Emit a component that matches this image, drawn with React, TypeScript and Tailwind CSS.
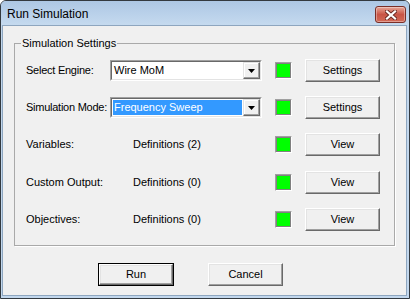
import type { ReactNode } from 'react'

const font = { fontFamily: '"Liberation Sans", Arial, sans-serif' }

const ClassicButton = ({ children, isDefault = false }: { children: ReactNode; isDefault?: boolean }) => {
  const face = (
    <div className="flex-1 flex items-center justify-center bg-[#f0f0f0] border border-t-white border-l-white border-b-[#696969] border-r-[#696969] shadow-[inset_-1px_-1px_0_#a0a0a0,inset_1px_1px_0_#e3e3e3] text-[11px] text-black">
      {children}
    </div>
  )
  if (isDefault) {
    return <div className="shrink-0 w-[76px] h-[23px] flex border border-black">{face}</div>
  }
  return <div className="shrink-0 w-[75px] h-[23px] flex">{face}</div>
}

const StatusLight = () => (
  <div className="shrink-0 w-[17px] h-[17px] border border-t-[#a0a0a0] border-l-[#a0a0a0] border-b-white border-r-white">
    <div className="w-full h-full bg-[#00ff00] border border-[#808080]" />
  </div>
)

const ComboBox = ({ value, selected = false }: { value: string; selected?: boolean }) => (
  <div className="shrink-0 w-[152px] h-[21px] flex border border-t-[#a0a0a0] border-l-[#a0a0a0] border-b-white border-r-white">
    <div className="flex-1 flex border border-t-[#696969] border-l-[#696969] border-b-[#e3e3e3] border-r-[#e3e3e3] bg-white">
      <div className="flex-1 flex items-center p-[1px]">
        <div className={`flex-1 h-full flex items-center pl-[1px] text-[11px] whitespace-nowrap ${selected ? 'bg-[#3399ff] text-white' : 'text-black'}`}>
          {value}
        </div>
      </div>
      <div className="w-[17px] flex items-center justify-center bg-[#f0f0f0] border border-t-[#e3e3e3] border-l-[#e3e3e3] border-b-[#696969] border-r-[#696969] shadow-[inset_-1px_-1px_0_#a0a0a0,inset_1px_1px_0_#fff]">
        <svg width="7" height="4" viewBox="0 0 7 4">
          <path d="M0 0h7L3.5 4z" fill="#000" />
        </svg>
      </div>
    </div>
  </div>
)

const rows = [
  { label: 'Select Engine:', combo: 'Wire MoM', action: 'Settings' },
  { label: 'Simulation Mode:', combo: 'Frequency Sweep', selected: true, action: 'Settings' },
  { label: 'Variables:', text: 'Definitions (2)', action: 'View' },
  { label: 'Custom Output:', text: 'Definitions (0)', action: 'View' },
  { label: 'Objectives:', text: 'Definitions (0)', action: 'View' },
]

export default function App() {
  return (
    <div style={font} className="w-[410px] h-[299px] flex flex-col bg-[#c2d7ed] border border-[#33393f] rounded-t-[6px] overflow-hidden text-black">
      {/* Title bar */}
      <div className="h-[24px] flex items-center justify-between pl-[6px] pr-[3px] bg-gradient-to-b from-[#adc7e4] to-[#c5daef]">
        <span className="text-[12px] pt-[2px]">Run Simulation</span>
        <div className="w-[31px] h-[17px] mt-[3px] flex items-center justify-center rounded-[3px] border border-[#7a2e27] bg-gradient-to-b from-[#e6a597] via-[#c85446] to-[#d26a57] shadow-[inset_0_0_0_1px_rgba(255,255,255,0.35)]">
          <svg width="12" height="10" viewBox="0 0 12 10">
            <path d="M2 1.5L10 8.5M10 1.5L2 8.5" stroke="#6b2a24" strokeWidth="4" strokeLinecap="square" />
            <path d="M2 1.5L10 8.5M10 1.5L2 8.5" stroke="#fff" strokeWidth="2.2" strokeLinecap="square" />
          </svg>
        </div>
      </div>

      {/* Client area */}
      <div className="flex-1 ml-[1px] mr-[2px] mb-[2px] flex flex-col bg-[#f0f0f0] border border-[#8ea6bf]">
        <fieldset className="mt-[11px] mx-[11px] pl-[11px] pr-[11px] pt-[9px] pb-[14px] border border-[#a9a9a9] shadow-[1px_1px_0_#fff]">
          <legend className="-ml-[5px] px-[1px] text-[11px] leading-[13px]">Simulation Settings</legend>
          <div className="flex flex-col gap-[14px]">
            {rows.map((row, idx) => (
              <div key={idx} className={`h-[23px] flex items-center text-[11px] whitespace-nowrap ${idx === 3 ? 'mt-[1px]' : ''}`}>
                {row.combo ? (
                  <>
                    <div className="shrink-0 w-[84px] tracking-[-0.25px]">{row.label}</div>
                    <ComboBox value={row.combo} selected={row.selected} />
                    <div className="shrink-0 w-[13px]" />
                  </>
                ) : (
                  <>
                    <div className="shrink-0 w-[107px]">{row.label}</div>
                    <div className="shrink-0 w-[142px]">{row.text}</div>
                  </>
                )}
                <StatusLight />
                <div className="shrink-0 w-[13px]" />
                <ClassicButton>{row.action}</ClassicButton>
              </div>
            ))}
          </div>
        </fieldset>

        {/* Dialog buttons */}
        <div className="mt-[17px] pl-[95px] flex items-center gap-[34px]">
          <ClassicButton isDefault>Run</ClassicButton>
          <ClassicButton>Cancel</ClassicButton>
        </div>
      </div>
    </div>
  )
}
